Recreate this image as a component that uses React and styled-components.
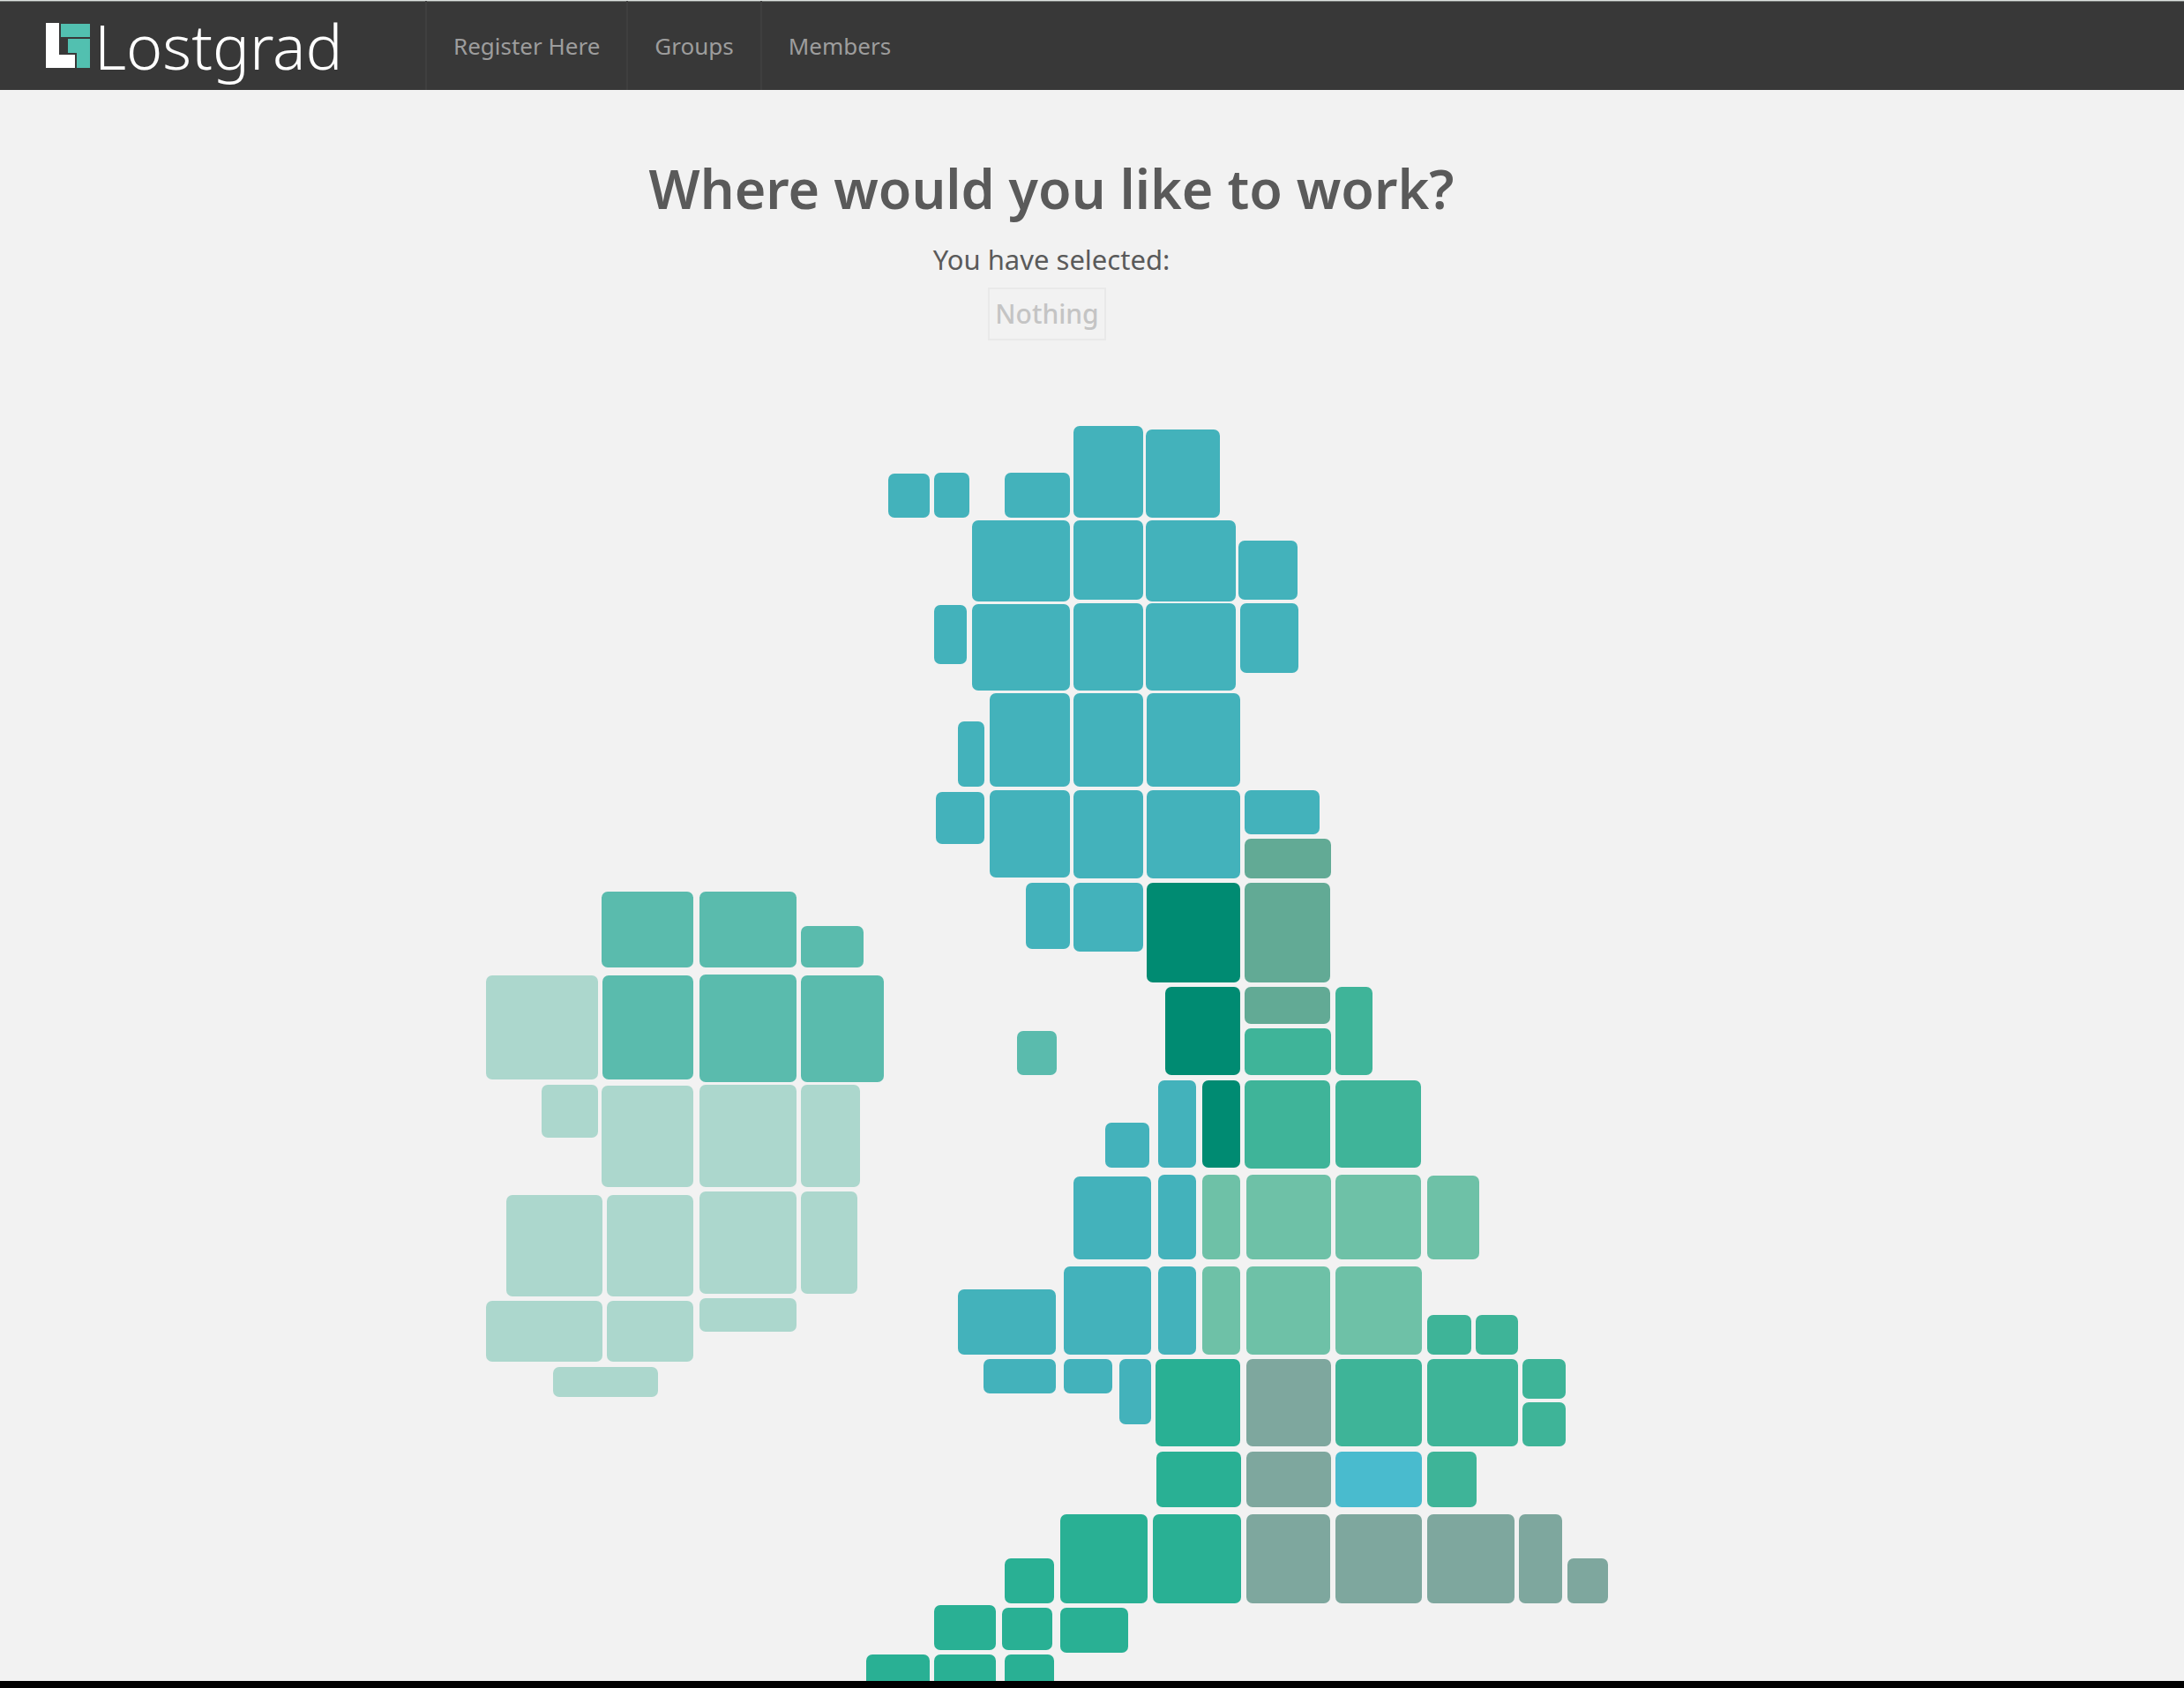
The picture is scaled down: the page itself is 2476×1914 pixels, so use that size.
import React from "react";
import styled, { createGlobalStyle } from "styled-components";

const GlobalStyle = createGlobalStyle`
  *, *::before, *::after { box-sizing: border-box; }
  body {
    margin: 0;
    background: #f2f2f2;
    color: #5a5a5a;
    font-family: "Noto Sans", "Open Sans", sans-serif;
  }
`;

const Page = styled.div`
  display: flex;
  flex-direction: column;
  height: 100vh;
  overflow: hidden;
`;

const Header = styled.header`
  display: flex;
  flex: none;
  align-items: stretch;
  height: 102px;
  padding-left: 52px;
  border-top: 1px solid #dde2e0;
  background: #383838;
  box-shadow: inset 0 1px 0 #767a78;
`;

const Brand = styled.a`
  display: flex;
  align-items: center;
  gap: 4px;
  width: 430px;
  color: #ffffff;
  font-size: 70px;
  font-weight: 300;
  line-height: 98px;
  text-decoration: none;
`;

const Mark = styled.svg`
  display: block;
  width: 51px;
  height: 51px;
`;

const Nav = styled.nav`
  display: flex;
`;

const NavLink = styled.a`
  display: flex;
  align-items: center;
  padding: 0 30px;
  border-left: 2px solid #3f3f3f;
  color: #9d9d9d;
  font-size: 26px;
  line-height: 36px;
  text-decoration: none;
`;

const Main = styled.main`
  display: flex;
  flex: 1;
  flex-direction: column;
  align-items: center;
  min-height: 0;
  padding: 70px 92px 0 0;
  overflow: hidden;
`;

const Title = styled.h1`
  margin: 0;
  font-size: 61px;
  font-weight: 600;
  line-height: 84px;
`;

const Prompt = styled.p`
  margin: 18px 0 12px;
  font-size: 31px;
  line-height: 40px;
`;

const Selection = styled.output`
  height: 60px;
  margin-right: 10px;
  padding: 0 6px;
  border: 2px solid #e9e9e9;
  color: #c4c4c4;
  font-size: 30px;
  font-weight: 500;
  line-height: 56px;
`;

const Map = styled.svg`
  display: block;
  flex: none;
  width: 1292px;
  height: 1560px;
  margin-top: 90px;
`;

const Footer = styled.footer`
  flex: none;
  height: 8px;
  background: #000000;
`;

const links = ["Register Here", "Groups", "Members"];

// Each tile is [left, top, right, bottom] in map units.
const regions = [
  {
    id: "scotland",
    color: "#43b2bb",
    tiles: [
      [1007, 537, 1054, 587], [1059, 536, 1099, 587], [1139, 536, 1213, 587], [1217, 483, 1296, 587], [1299, 487, 1383, 587],
      [1102, 590, 1213, 682], [1217, 590, 1296, 680], [1299, 590, 1401, 682], [1404, 613, 1471, 680],
      [1059, 686, 1096, 753], [1102, 685, 1213, 783], [1217, 684, 1296, 783], [1299, 684, 1401, 783], [1406, 684, 1472, 763],
      [1086, 818, 1116, 892], [1122, 786, 1213, 892], [1217, 786, 1296, 892], [1300, 786, 1406, 892],
      [1061, 898, 1116, 957], [1122, 896, 1213, 995], [1217, 896, 1296, 996], [1300, 896, 1406, 996], [1411, 896, 1496, 946],
      [1163, 1001, 1213, 1076], [1217, 1001, 1296, 1079],
    ],
  },
  {
    id: "wales",
    color: "#43b2bb",
    tiles: [
      [1313, 1225, 1356, 1324], [1253, 1273, 1303, 1324],
      [1217, 1334, 1305, 1428], [1313, 1332, 1356, 1428],
      [1086, 1462, 1197, 1536], [1206, 1436, 1305, 1536], [1313, 1436, 1356, 1536],
      [1115, 1541, 1197, 1580], [1206, 1541, 1261, 1580], [1269, 1541, 1305, 1615],
    ],
  },
  {
    id: "north-east",
    color: "#62aa95",
    tiles: [[1411, 951, 1509, 996], [1411, 1001, 1508, 1114], [1411, 1119, 1508, 1161]],
  },
  {
    id: "north-west",
    color: "#008b72",
    tiles: [[1300, 1001, 1406, 1114], [1321, 1119, 1406, 1219], [1363, 1225, 1406, 1324]],
  },
  {
    id: "yorkshire",
    color: "#3fb499",
    tiles: [[1411, 1166, 1509, 1219], [1514, 1119, 1556, 1219], [1411, 1225, 1508, 1325], [1514, 1225, 1611, 1324]],
  },
  {
    id: "midlands",
    color: "#6ec1a7",
    tiles: [
      [1363, 1332, 1406, 1428], [1413, 1332, 1509, 1428], [1514, 1332, 1611, 1428], [1618, 1333, 1677, 1428],
      [1363, 1436, 1406, 1536], [1413, 1436, 1508, 1536], [1514, 1436, 1612, 1536],
    ],
  },
  {
    id: "east",
    color: "#3eb498",
    tiles: [
      [1618, 1491, 1668, 1536], [1673, 1491, 1721, 1536],
      [1514, 1541, 1612, 1640], [1618, 1541, 1721, 1640], [1726, 1541, 1775, 1586], [1726, 1590, 1775, 1640],
      [1618, 1646, 1674, 1709],
    ],
  },
  { id: "london", color: "#49bbce", tiles: [[1514, 1646, 1612, 1709]] },
  {
    id: "south-east",
    color: "#7ea79e",
    tiles: [
      [1413, 1541, 1509, 1640], [1413, 1646, 1509, 1709],
      [1413, 1717, 1508, 1818], [1514, 1717, 1612, 1818], [1618, 1717, 1717, 1818], [1722, 1717, 1771, 1818], [1777, 1767, 1823, 1818],
    ],
  },
  {
    id: "south-west",
    color: "#29b094",
    tiles: [
      [1310, 1541, 1406, 1640], [1311, 1646, 1407, 1709],
      [1202, 1717, 1301, 1818], [1307, 1717, 1407, 1818], [1139, 1767, 1195, 1818],
      [1059, 1820, 1129, 1871], [1136, 1823, 1193, 1871], [1202, 1823, 1279, 1874],
      [982, 1876, 1054, 1926], [1059, 1876, 1129, 1926], [1139, 1876, 1195, 1926],
    ],
  },
  {
    id: "northern-ireland",
    color: "#5abbad",
    tiles: [
      [682, 1011, 786, 1097], [793, 1011, 903, 1097], [908, 1050, 979, 1097],
      [683, 1106, 786, 1224], [793, 1105, 903, 1227], [908, 1106, 1002, 1227],
      [1153, 1169, 1198, 1219],
    ],
  },
  {
    id: "ireland",
    color: "#acd7cd",
    tiles: [
      [551, 1106, 678, 1224], [614, 1230, 678, 1290],
      [682, 1231, 786, 1346], [793, 1230, 903, 1346], [908, 1230, 975, 1346],
      [574, 1355, 683, 1470], [688, 1355, 786, 1470], [793, 1351, 903, 1467], [908, 1351, 972, 1467],
      [551, 1475, 683, 1544], [688, 1475, 786, 1544], [793, 1472, 903, 1510],
      [627, 1550, 746, 1584],
    ],
  },
];

export default function App() {
  return (
    <>
      <GlobalStyle />
      <Page>
        <Header>
          <Brand href="#home">
            <Mark viewBox="0 0 51 51" aria-hidden="true">
              <path d="M0 0H15V36H33V51H0Z" fill="#ffffff" />
              <path d="M17 1H50V16H17ZM25 18H50V51H35V34H25Z" fill="#52c0b0" />
            </Mark>
            Lostgrad
          </Brand>
          <Nav>
            {links.map((label) => (
              <NavLink key={label} href="#menu">{label}</NavLink>
            ))}
          </Nav>
        </Header>
        <Main>
          <Title>Where would you like to work?</Title>
          <Prompt>You have selected:</Prompt>
          <Selection>Nothing</Selection>
          <Map viewBox="546 476 1292 1560" aria-hidden="true">
            {regions.map(({ id, color, tiles }) => (
              <g key={id} fill={color}>
                {tiles.map(([left, top, right, bottom]) => (
                  <rect key={`${left}-${top}`} x={left} y={top} width={right - left} height={bottom - top} rx="7" />
                ))}
              </g>
            ))}
          </Map>
        </Main>
        <Footer />
      </Page>
    </>
  );
}
